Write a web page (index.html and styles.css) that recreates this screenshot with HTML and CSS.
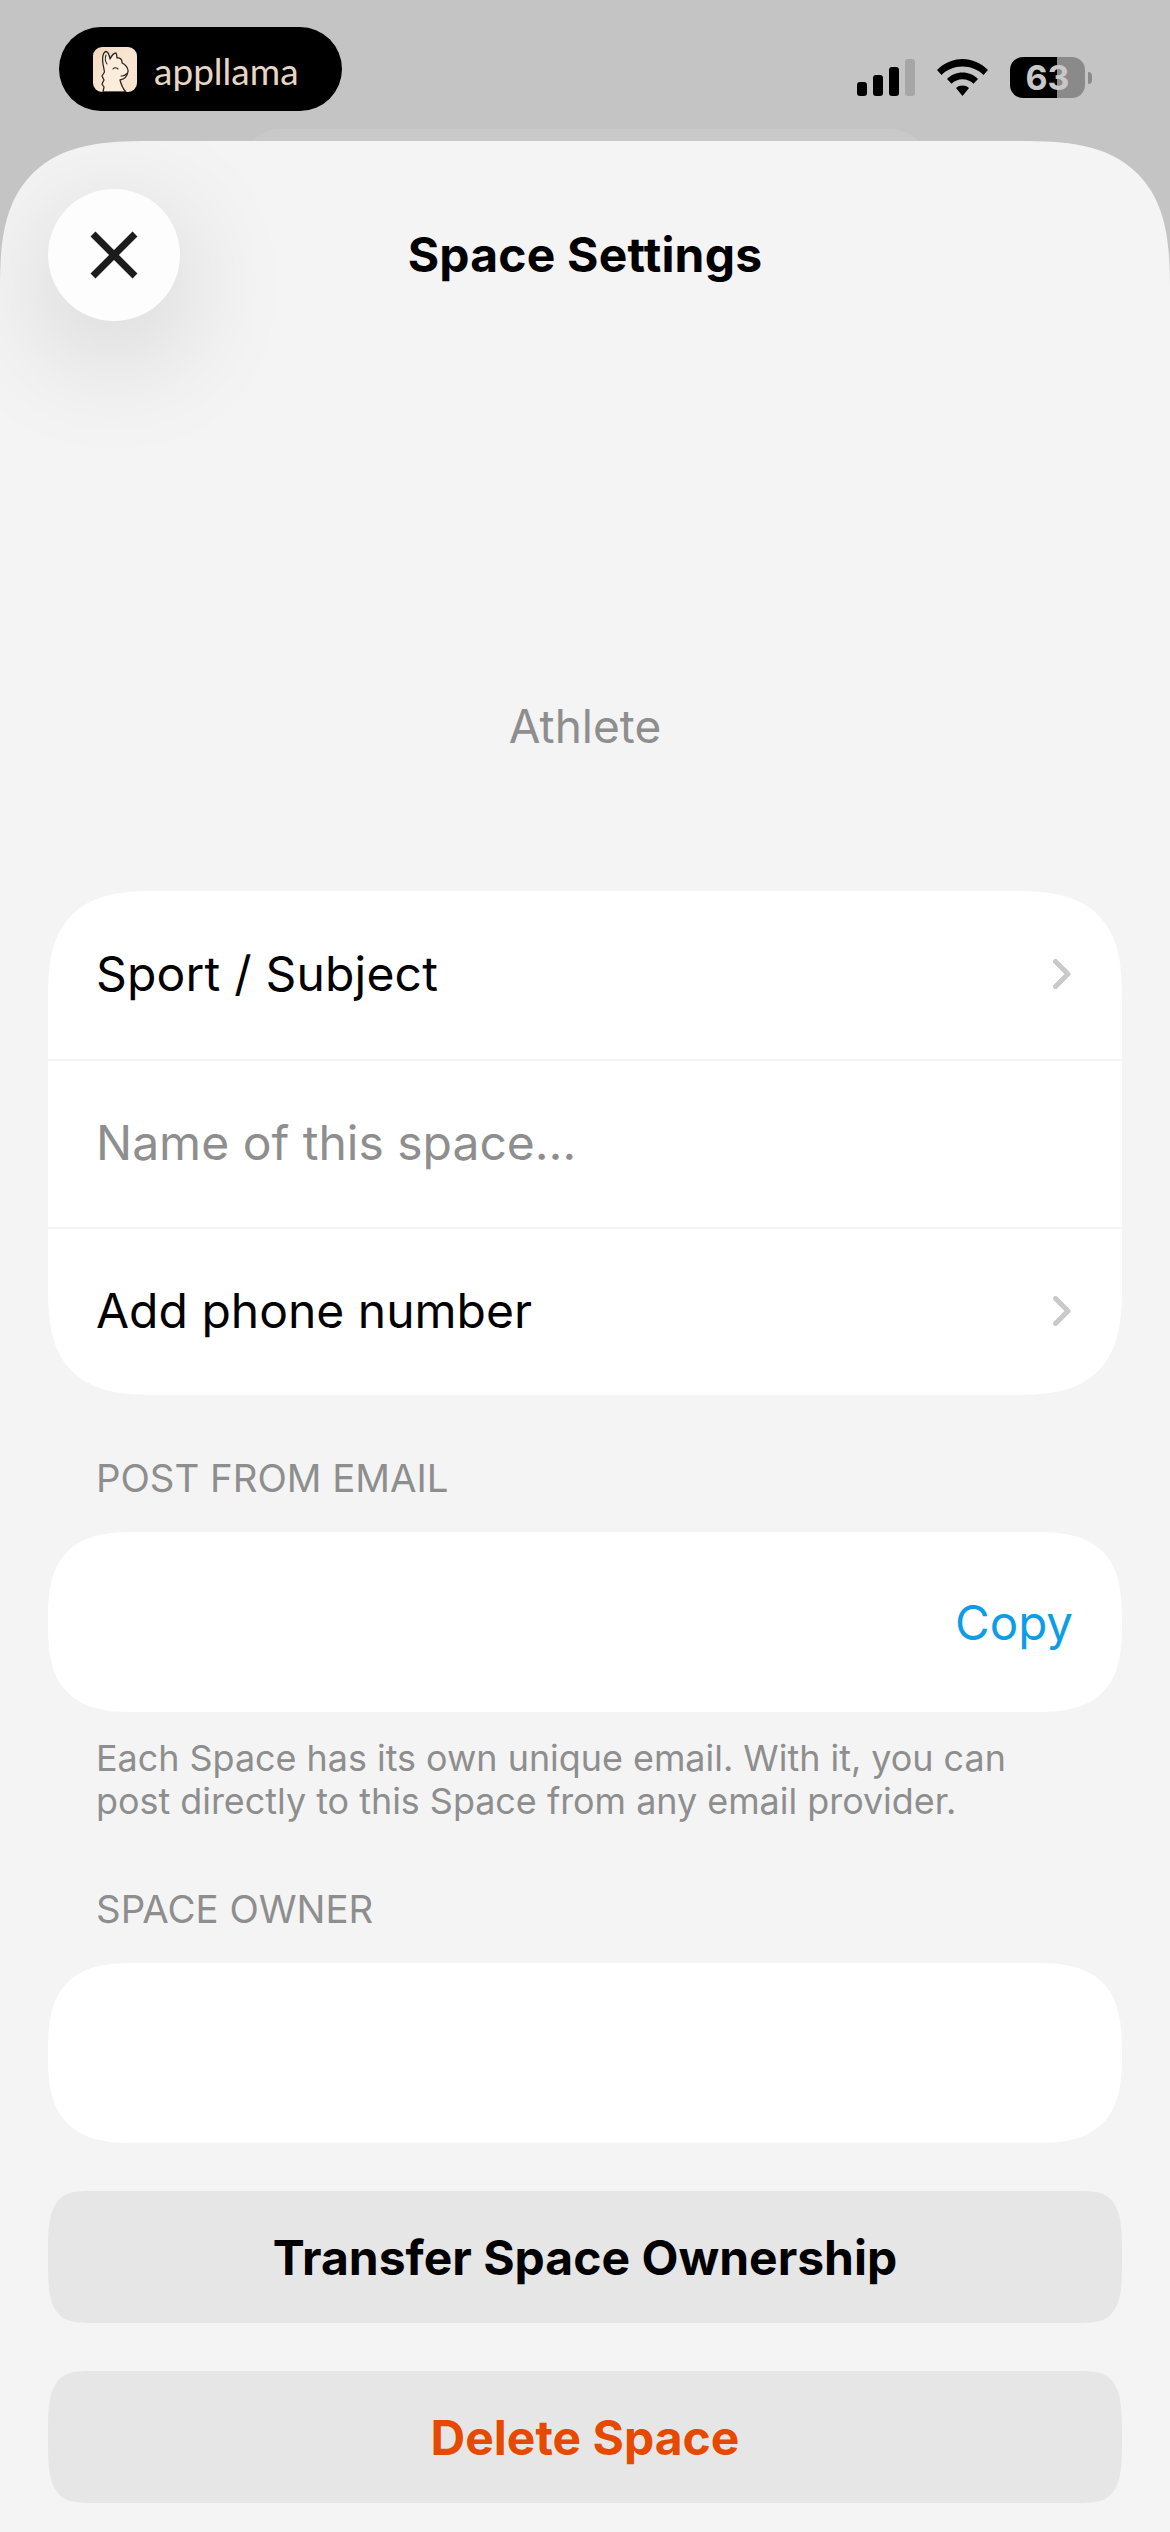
FILE: index.html
```html
<html>
  <head>
    <link rel="stylesheet" href="styles.css">
    <title>Space Settings</title>
  </head>
  <body>
    <div class="status">
      <div class="pill">
        <svg class="llama" viewBox="0 0 44 45">
          <defs>
            <linearGradient id="tile" x1="0" y1="0" x2="1" y2="1">
              <stop offset="0" stop-color="#f0d8be"/>
              <stop offset="0.5" stop-color="#f9e6d2"/>
              <stop offset="1" stop-color="#f7e2cb"/>
            </linearGradient>
          </defs>
          <rect width="44" height="45" rx="9" fill="url(#tile)"/>
          <path d="M10 45L11 40L9 37L11 33L9 29L11.500 25L10 17C9 11 10 5 13 4.500C15.500 5 16.500 9 17 12C18.500 9 21 6 23 6C24 8 24 10 24 11C27 10 29.500 13 29 16C32 17 35.500 21 35 24.500C34.500 28 32 32 27 33C28 37 30 42 33 45Z" fill="#fbecdb" stroke="#2e2824" stroke-width="1.300" stroke-linejoin="round"/>
          <path d="M13 8C12 11 12.500 15 14 17M20 22Q22 19.500 25 22M28 29Q31 29.500 34 26.500" fill="none" stroke="#2e2824" stroke-width="1.100" stroke-linecap="round"/>
        </svg>
        <span class="wordmark">appllama</span>
      </div>
      <div class="indicators">
        <div class="signal">
          <i class="b1"></i><i class="b2"></i><i class="b3"></i><i class="b4"></i>
        </div>
        <svg class="wifi" viewBox="0 0 51 37">
          <path d="M25.500 0C35 0 44 4 51 11L46.500 16C41 10.500 33.500 7.500 25.500 7.500C17.500 7.500 10 10.500 4.500 16L0 11C7 4 16 0 25.500 0Z"/>
          <path d="M25.500 13.500C31.500 13.500 37 15.800 41 20L36.500 24.800C33.500 21.800 29.700 20.300 25.500 20.300C21.300 20.300 17.500 21.800 14.500 24.800L10 20C14 15.800 19.500 13.500 25.500 13.500Z"/>
          <path d="M25.500 26.500C28 26.500 30.300 27.300 32 29L25.500 37L19 29C20.700 27.300 23 26.500 25.500 26.500Z"/>
        </svg>
        <div class="battery">
          <div class="battery-body"><span>63</span></div>
          <div class="battery-nub"></div>
        </div>
      </div>
    </div>

    <div class="sheet-behind"></div>

    <div class="sheet">
      <div class="header">
        <div class="close">
          <svg viewBox="0 0 48 48">
            <path d="M3 3L45 45M45 3L3 45" stroke="#1c1c1c" stroke-width="7" fill="none"/>
          </svg>
        </div>
        <h1>Space Settings</h1>
      </div>

      <div class="space-type">Athlete</div>

      <div class="card card-first">
        <div class="row">
          <span class="row-first">Sport / Subject</span>
          <svg class="chev" viewBox="0 0 18 30"><path d="M2.500 2.500L15 15L2.500 27.500"/></svg>
        </div>
        <div class="row placeholder"><span>Name of this space…</span></div>
        <div class="row">
          <span>Add phone number</span>
          <svg class="chev" viewBox="0 0 18 30"><path d="M2.500 2.500L15 15L2.500 27.500"/></svg>
        </div>
      </div>

      <div class="label label-first">POST FROM EMAIL</div>
      <div class="card card-single copy-card"><span class="copy">Copy</span></div>
      <p class="help">Each Space has its own unique email. With it, you can<br>post directly to this Space from any email provider.</p>

      <div class="label label-owner">SPACE OWNER</div>
      <div class="card card-single"></div>

      <div class="btn btn-transfer">Transfer Space Ownership</div>
      <div class="btn btn-delete">Delete Space</div>
    </div>
  </body>
</html>
```
FILE: styles.css
```css
* {
  box-sizing: border-box;
}
html, body {
  margin: 0;
  padding: 0;
}
body {
  width: 1170px;
  height: 2532px;
  overflow: hidden;
  position: relative;
  background-color: #c4c4c4;
  font-family: Inter, "Liberation Sans", sans-serif;
  color: #000;
}

.status {
  height: 141px;
  padding: 27px 78px 0 59px;
  display: flex;
  justify-content: space-between;
  align-items: flex-start;
}
.pill {
  width: 283px;
  height: 84px;
  border-radius: 42px;
  background-color: #000;
  display: flex;
  align-items: center;
  padding-left: 34px;
  gap: 17px;
}
.llama {
  width: 44px;
  height: 45px;
}
.wordmark {
  font-family: Lato, sans-serif;
  font-weight: 400;
  font-size: 37px;
  line-height: 1;
  color: #e6d6c4;
  margin-top: 2px;
}
.indicators {
  display: flex;
  align-items: flex-start;
  padding-top: 30px;
}
.signal {
  display: flex;
  align-items: flex-end;
  gap: 6px;
  height: 37px;
  margin-top: 2px;
}
.signal i {
  display: block;
  width: 10px;
  border-radius: 3px;
  background-color: #000;
}
.signal .b1 { height: 14px; }
.signal .b2 { height: 21px; }
.signal .b3 { height: 29px; }
.signal .b4 { height: 37px; background-color: #a6a6a6; }
.wifi {
  width: 51px;
  height: 37px;
  margin: 2px 0 0 22px;
}
.battery {
  display: flex;
  align-items: center;
  margin-left: 22px;
}
.battery-body {
  width: 75px;
  height: 41px;
  border-radius: 13px;
  background: linear-gradient(to right, #000 47px, #8a8a8a 47px);
  display: flex;
  align-items: center;
  justify-content: center;
  color: #c8c8c8;
  font-size: 34px;
  font-weight: 700;
}
.battery-nub {
  width: 4px;
  height: 12px;
  margin-left: 3px;
  border-radius: 0 6px 6px 0;
  background-color: #8a8a8a;
}

.sheet-behind {
  position: absolute;
  top: 129px;
  left: 240px;
  width: 690px;
  height: 40px;
  background-color: #c9c9c9;
  border-radius: 60px 60px 0 0;
}
.sheet {
  position: relative;
  height: 2391px;
  padding: 48px 48px 0;
  background-color: #f4f4f4;
  border-radius: 125px 125px 0 0;
  overflow: hidden;
}

.header {
  display: flex;
  align-items: center;
  height: 132px;
}
.close {
  width: 132px;
  height: 132px;
  border-radius: 50%;
  background-color: #fdfdfd;
  box-shadow: 0 30px 120px rgba(0, 0, 0, 0.16);
  display: flex;
  align-items: center;
  justify-content: center;
}
.close svg {
  width: 48px;
  height: 48px;
}
h1 {
  margin: 0;
  flex: 1;
  text-align: center;
  padding-right: 132px;
  font-size: 48px;
  line-height: 56px;
  font-weight: 700;
  letter-spacing: 0.2px;
}

.space-type {
  margin-top: 377px;
  text-align: center;
  font-size: 46px;
  line-height: 56px;
  color: #8e8e8e;
}

.card {
  background-color: #fff;
  border-radius: 84px;
  overflow: hidden;
}
.card-first {
  margin-top: 137px;
}
.row {
  height: 168px;
  padding: 0 51px 3px 48px;
  display: flex;
  align-items: center;
  justify-content: space-between;
  font-size: 48px;
}
.row + .row {
  border-top: 2px solid #f4f4f4;
}
.row-first {
  letter-spacing: 0.2px;
}
.placeholder {
  color: #8e8e8e;
}
.chev {
  width: 18px;
  height: 30px;
  fill: none;
  stroke: #c9c9c9;
  stroke-width: 5;
  stroke-linecap: round;
  stroke-linejoin: round;
}

.label {
  padding-left: 48px;
  font-size: 38.4px;
  line-height: 46px;
  color: #8e8e8e;
}
.label-first {
  margin-top: 60px;
}
.label-owner {
  margin-top: 63px;
}
.card-single {
  margin-top: 31px;
  height: 180px;
}
.copy-card {
  display: flex;
  align-items: center;
  justify-content: flex-end;
  padding-right: 49px;
}
.copy {
  font-size: 47.5px;
  color: #0d9de6;
}
.help {
  margin: 25px 0 0;
  padding-left: 48px;
  font-size: 35.9px;
  line-height: 43px;
  color: #8e8e8e;
}

.btn {
  height: 132px;
  border-radius: 42px / 66px;
  background-color: #e6e6e6;
  display: flex;
  align-items: center;
  justify-content: center;
  font-size: 48px;
  font-weight: 700;
}
.btn-transfer {
  margin-top: 48px;
}
.btn-delete {
  margin-top: 48px;
  color: #e64a00;
}

/* iOS style continuous corners where the browser can do them */
@supports (corner-shape: superellipse(1.5)) {
  .sheet {
    border-radius: 150px 150px 0 0;
    corner-shape: superellipse(1.5);
  }
  .card {
    border-radius: 110px;
    corner-shape: superellipse(1.5);
  }
  .btn {
    border-radius: 46px / 66px;
    corner-shape: superellipse(1.8);
  }
}
```
